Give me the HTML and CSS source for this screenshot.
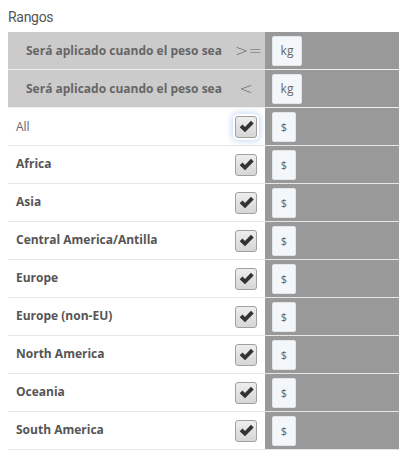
FILE: index.html
```html
<!DOCTYPE html>
<html>
<head>
<meta charset="utf-8">
<link rel="stylesheet" href="styles.css">
</head>
<body>
<div class="title">Rangos</div>
<div class="table">
  <div class="row head">
    <div class="left"><span class="label">Será aplicado cuando el peso sea</span><span class="op">&gt;=</span></div>
    <div class="right"><span class="inp kg">kg</span></div>
  </div>
  <div class="row head">
    <div class="left"><span class="label">Será aplicado cuando el peso sea</span><span class="op">&lt;</span></div>
    <div class="right"><span class="inp kg">kg</span></div>
  </div>
  <div class="row">
    <div class="left"><span class="name all">All</span><span class="cb focus"><svg viewBox="0 0 16 16"><path d="M1.6 8.6 L4.2 6.1 L6.6 8.4 L12.2 2.6 L14.8 5.1 L6.6 13.4 Z"/></svg></span></div>
    <div class="right"><span class="inp">$</span></div>
  </div>
  <div class="row">
    <div class="left"><span class="name">Africa</span><span class="cb"><svg viewBox="0 0 16 16"><path d="M1.6 8.6 L4.2 6.1 L6.6 8.4 L12.2 2.6 L14.8 5.1 L6.6 13.4 Z"/></svg></span></div>
    <div class="right"><span class="inp">$</span></div>
  </div>
  <div class="row">
    <div class="left"><span class="name">Asia</span><span class="cb"><svg viewBox="0 0 16 16"><path d="M1.6 8.6 L4.2 6.1 L6.6 8.4 L12.2 2.6 L14.8 5.1 L6.6 13.4 Z"/></svg></span></div>
    <div class="right"><span class="inp">$</span></div>
  </div>
  <div class="row">
    <div class="left"><span class="name">Central America/Antilla</span><span class="cb"><svg viewBox="0 0 16 16"><path d="M1.6 8.6 L4.2 6.1 L6.6 8.4 L12.2 2.6 L14.8 5.1 L6.6 13.4 Z"/></svg></span></div>
    <div class="right"><span class="inp">$</span></div>
  </div>
  <div class="row">
    <div class="left"><span class="name">Europe</span><span class="cb"><svg viewBox="0 0 16 16"><path d="M1.6 8.6 L4.2 6.1 L6.6 8.4 L12.2 2.6 L14.8 5.1 L6.6 13.4 Z"/></svg></span></div>
    <div class="right"><span class="inp">$</span></div>
  </div>
  <div class="row">
    <div class="left"><span class="name">Europe (non-EU)</span><span class="cb"><svg viewBox="0 0 16 16"><path d="M1.6 8.6 L4.2 6.1 L6.6 8.4 L12.2 2.6 L14.8 5.1 L6.6 13.4 Z"/></svg></span></div>
    <div class="right"><span class="inp">$</span></div>
  </div>
  <div class="row">
    <div class="left"><span class="name">North America</span><span class="cb"><svg viewBox="0 0 16 16"><path d="M1.6 8.6 L4.2 6.1 L6.6 8.4 L12.2 2.6 L14.8 5.1 L6.6 13.4 Z"/></svg></span></div>
    <div class="right"><span class="inp">$</span></div>
  </div>
  <div class="row">
    <div class="left"><span class="name">Oceania</span><span class="cb"><svg viewBox="0 0 16 16"><path d="M1.6 8.6 L4.2 6.1 L6.6 8.4 L12.2 2.6 L14.8 5.1 L6.6 13.4 Z"/></svg></span></div>
    <div class="right"><span class="inp">$</span></div>
  </div>
  <div class="row">
    <div class="left"><span class="name">South America</span><span class="cb"><svg viewBox="0 0 16 16"><path d="M1.6 8.6 L4.2 6.1 L6.6 8.4 L12.2 2.6 L14.8 5.1 L6.6 13.4 Z"/></svg></span></div>
    <div class="right"><span class="inp">$</span></div>
  </div>
</div>
</body>
</html>
```
FILE: styles.css
```css
html, body {
  margin: 0;
  padding: 0;
  background: #fff;
}
body {
  padding: 8px;
  font-family: "Open Sans", "DejaVu Sans", sans-serif;
  color: #555;
}
.title {
  font-family: Roboto, "Open Sans", sans-serif;
  font-size: 14px;
  color: #555;
  height: 24px;
  line-height: 18px;
  letter-spacing: -0.3px;
}
.table {
  width: 391px;
}
.row {
  display: grid;
  grid-template-columns: 257px 134px;
  height: 37px;
  border-bottom: 1px solid #e6e6e6;
}
.left {
  display: flex;
  align-items: center;
  justify-content: space-between;
  padding: 0 8px 0 8px;
}
.head .left {
  background: #cbcbcb;
  padding-left: 18px;
}
.head {
  border-bottom-color: #eeeeee;
}
.right {
  background: #999999;
  display: flex;
  align-items: center;
  padding-left: 7px;
}
.label {
  font-size: 12px;
  font-weight: 700;
  color: #666;
}
.op {
  width: 22px;
  text-align: center;
  font-family: "DejaVu Sans", sans-serif;
  font-weight: 300;
  font-size: 16px;
  color: #666;
}
.name {
  font-size: 12px;
  font-weight: 700;
  color: #555;
  padding-bottom: 3px;
}
.name.all {
  font-weight: 400;
  color: #666;
  padding-bottom: 1px;
}
.cb {
  width: 20px;
  height: 20px;
  border: 1px solid #a0a0a0;
  border-radius: 3px;
  background: linear-gradient(#eeeeee, #d6d6d6);
  display: flex;
  align-items: center;
  justify-content: center;
}
.cb svg {
  width: 17px;
  height: 17px;
  fill: #333;
}
.cb.focus {
  box-shadow: 0 0 0 2px #fff, 0 0 6px 3px rgba(120, 170, 230, 0.45);
}
.inp {
  box-sizing: border-box;
  width: 24px;
  height: 30px;
  background: #f4f7f9;
  border: 1px solid #e2e6e9;
  border-radius: 2px;
  font-size: 11px;
  color: #6b5a4a;
  display: flex;
  align-items: center;
  justify-content: center;
}
.inp.kg {
  width: 30px;
  font-size: 12px;
  color: #666;
}
```
